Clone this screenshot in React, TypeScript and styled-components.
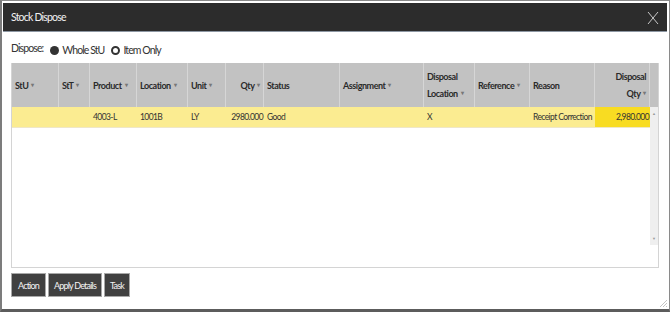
import styled, { createGlobalStyle } from "styled-components"

const GlobalStyle = createGlobalStyle`
  html, body {
    margin: 0;
    padding: 0;
    background: #fff;
  }
  * {
    box-sizing: border-box;
  }
`

const columns = [
  { key: "stu", title: ["StU"], width: 47, sort: true },
  { key: "stt", title: ["StT"], width: 31, sort: true },
  { key: "product", title: ["Product"], width: 47, sort: true },
  { key: "location", title: ["Location"], width: 51, sort: true },
  { key: "unit", title: ["Unit"], width: 38, sort: true },
  { key: "qty", title: ["Qty"], width: 38, sort: true, right: true },
  { key: "status", title: ["Status"], width: 76, sort: false },
  { key: "assignment", title: ["Assignment"], width: 84, sort: true },
  { key: "dispLoc", title: ["Disposal", "Location"], width: 51, sort: true },
  { key: "reference", title: ["Reference"], width: 55, sort: true },
  { key: "reason", title: ["Reason"], width: 65, sort: false },
  { key: "dispQty", title: ["Disposal", "Qty"], width: 55, sort: true, right: true },
]

const rows = [
  {
    stu: "",
    stt: "",
    product: "4003-L",
    location: "1001B",
    unit: "LY",
    qty: "2980.000",
    status: "Good",
    assignment: "",
    dispLoc: "X",
    reference: "",
    reason: "Receipt Correction",
    dispQty: "2,980.000",
  },
]

const colTemplate = columns.map(c => `${c.width}px`).join(" ")

export default function App() {
  return (
    <>
      <GlobalStyle />
      <Dialog>
        <TitleBar>
          <span>Stock Dispose</span>
          <CloseIcon viewBox="0 0 12 14">
            <path d="M1 1 L11 13 M11 1 L1 13" />
          </CloseIcon>
        </TitleBar>
        <Body>
          <DisposeRow>
            <Label>Dispose:</Label>
            <Option>
              <Radio checked />
              <span>Whole StU</span>
            </Option>
            <Option>
              <Radio />
              <span>Item Only</span>
            </Option>
          </DisposeRow>
          <Table>
            <HeaderRow $cols={colTemplate + " 9px"}>
              {columns.map(col => (
                <HeaderCell key={col.key} $right={col.right}>
                  {col.title.map((line, i) => (
                    <div key={i}>
                      {line}
                      {col.sort && i === col.title.length - 1 && <Sort>▾</Sort>}
                    </div>
                  ))}
                </HeaderCell>
              ))}
              <HeaderCell />
            </HeaderRow>
            <TableBody>
              <RowsArea>
                {rows.map((row, idx) => (
                  <DataRow key={idx} $cols={colTemplate}>
                    {columns.map(col => (
                      <Cell key={col.key} $right={col.right} $highlight={col.key === "dispQty"}>
                        {(row as any)[col.key]}
                      </Cell>
                    ))}
                  </DataRow>
                ))}
              </RowsArea>
              <ScrollBar>
                <ScrollArrow>▲</ScrollArrow>
                <ScrollArrow>▼</ScrollArrow>
              </ScrollBar>
            </TableBody>
          </Table>
          <ButtonBar>
            <ActionButton>Action</ActionButton>
            <ActionButton>Apply Details</ActionButton>
            <ActionButton>Task</ActionButton>
          </ButtonBar>
        </Body>
        <Grip viewBox="0 0 8 8">
          <path d="M8 1 L1 8 M8 4 L4 8 M8 7 L7 8" />
        </Grip>
      </Dialog>
    </>
  )
}

const Dialog = styled.div`
  position: relative;
  width: 670px;
  height: 312px;
  border: 1px solid #8a8a8a;
  border-bottom: 3px solid #5c5c5c;
  border-left: 2px solid #7c7c7c;
  padding: 2px 2px 0 1px;
  display: flex;
  flex-direction: column;
  font-family: Lato, "Open Sans", sans-serif;
  color: #2a2a2a;
  background: #fff;
`

const TitleBar = styled.div`
  height: 29px;
  background: #2c2c2c;
  display: flex;
  align-items: center;
  justify-content: space-between;
  padding: 0 8px 0 8px;
  color: #f2f2f2;
  font-size: 10.5px;
  letter-spacing: -0.8px;
  border-bottom: 1px solid #8d97a3;
`

const CloseIcon = styled.svg`
  width: 12px;
  height: 14px;
  margin-top: 2px;
  fill: none;
  stroke: #c8c8c8;
  stroke-width: 1;
`

const Body = styled.div`
  flex: 1;
  display: flex;
  flex-direction: column;
  padding: 8px 8px 0 8px;
`

const DisposeRow = styled.div`
  display: flex;
  align-items: center;
  height: 23px;
  padding-bottom: 3px;
  font-size: 10.5px;
  letter-spacing: -0.9px;
  color: #333;
  gap: 7px;
`

const Label = styled.span`
  margin-top: -5px;
`

const Option = styled.label`
  display: flex;
  align-items: center;
  gap: 3px;
`

const Radio = styled.span<{ checked?: boolean }>`
  width: 9px;
  height: 9px;
  border-radius: 50%;
  background: ${p => (p.checked ? "#333" : "#fff")};
  border: ${p => (p.checked ? "none" : "2px solid #333")};
  flex-shrink: 0;
`

const Table = styled.div`
  width: 648px;
  height: 205px;
  border: 1px solid #d4d4d4;
  border-top: none;
  display: flex;
  flex-direction: column;
`

const HeaderRow = styled.div<{ $cols: string }>`
  display: grid;
  grid-template-columns: ${p => p.$cols};
  height: 44px;
  background: #c2c2c2;
`

const HeaderCell = styled.div<{ $right?: boolean }>`
  display: flex;
  flex-direction: column;
  justify-content: center;
  align-items: ${p => (p.$right ? "flex-end" : "flex-start")};
  gap: 6px;
  padding: 0 3px;
  border-right: 1px solid #d6d6d6;
  font-size: 9px;
  font-weight: 700;
  letter-spacing: -0.45px;
  color: #2a2a2a;
  white-space: nowrap;
  &:last-child {
    border-right: none;
  }
`

const Sort = styled.span`
  font-size: 6px;
  color: #777;
  margin-left: 3px;
  vertical-align: 2px;
`

const TableBody = styled.div`
  flex: 1;
  display: flex;
`

const RowsArea = styled.div`
  flex: 1;
`

const DataRow = styled.div<{ $cols: string }>`
  display: grid;
  grid-template-columns: ${p => p.$cols};
  height: 21px;
  background: #fbec91;
  border-bottom: 1px solid #efe7c8;
`

const Cell = styled.div<{ $right?: boolean; $highlight?: boolean }>`
  display: flex;
  align-items: center;
  justify-content: ${p => (p.$right ? "flex-end" : "flex-start")};
  padding: 0 ${p => (p.$right ? "1px" : "3px")} 0 3px;
  font-size: 8.5px;
  letter-spacing: -0.6px;
  color: #333;
  white-space: nowrap;
  background: ${p => (p.$highlight ? "#f8dc22" : "transparent")};
`

const ScrollBar = styled.div`
  width: 9px;
  height: 138px;
  background: #efefef;
  display: flex;
  flex-direction: column;
  justify-content: space-between;
  align-items: center;
  padding: 5px 0 4px;
`

const ScrollArrow = styled.span`
  font-size: 4px;
  color: #999;
  line-height: 1;
`

const ButtonBar = styled.div`
  display: flex;
  gap: 2px;
  margin-top: 5px;
`

const ActionButton = styled.button`
  height: 24px;
  padding: 0 5px;
  background: #404040;
  border: 1px solid #a8a8a8;
  color: #f4f4f4;
  font-family: Lato, sans-serif;
  font-size: 9px;
  letter-spacing: -0.8px;
  cursor: pointer;
  &:first-child {
    width: 35px;
    padding: 0;
  }
`

const Grip = styled.svg`
  position: absolute;
  right: 2px;
  bottom: 2px;
  width: 8px;
  height: 8px;
  fill: none;
  stroke: #aaa;
  stroke-width: 0.7;
`
